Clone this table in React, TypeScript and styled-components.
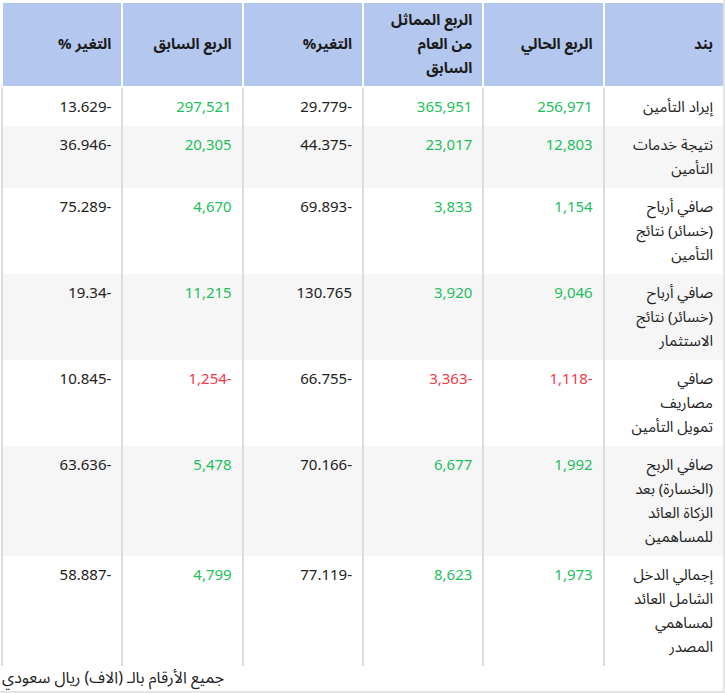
import React, { FunctionComponent } from 'react'
import styled, { createGlobalStyle } from 'styled-components'

const GlobalStyle = createGlobalStyle`
  html, body {
    margin: 0;
    padding: 0;
    background: #fff;
  }
  body {
    font-family: "Noto Sans Arabic", "Noto Sans", "DejaVu Sans", sans-serif;
    color: #222;
  }
`

const Frame = styled.div`
  width: 725px;
  height: 693px;
  box-sizing: border-box;
  padding: 3px 0 0 1px;
  border-right: 2px solid #e4e4e4;
  border-bottom: 2px solid #e4e4e4;
  overflow: hidden;
`

const Table = styled.table`
  width: 100%;
  direction: rtl;
  table-layout: fixed;
  border-collapse: separate;
  border-spacing: 0;
  font-size: 15px;
  line-height: 24px;
`

const HeadCell = styled.th`
  background: #b4c7ee;
  color: #1b1b1b;
  font-weight: 700;
  text-align: right;
  vertical-align: middle;
  padding: 5px 10px 6px;
  height: 72px;
  border-left: 2px solid #fff;
  border-bottom: 2px solid #fff;
`

const Row = styled.tr<{ $shade: boolean }>`
  background: ${(p) => (p.$shade ? '#f6f6f6' : '#fff')};
`

const Cell = styled.td<{ $tone?: 'up' | 'down' }>`
  text-align: right;
  vertical-align: top;
  padding: 7px 10px;
  border-left: 2px solid #dcdcdc;
  color: ${(p) => (p.$tone === 'up' ? '#1dbf5c' : p.$tone === 'down' ? '#f2394b' : '#222')};
`

const Note = styled.div`
  direction: rtl;
  text-align: left;
  font-size: 16px;
  line-height: 24px;
  padding-left: 1px;
`

type LineType = {
  label: string[]
  current: string
  sameLastYear: string
  changeYear: string
  previous: string
  changeQuarter: string
}

const headers: string[][] = [
  ['بند'],
  ['الربع الحالي'],
  ['الربع المماثل', 'من العام', 'السابق'],
  ['التغير%'],
  ['الربع السابق'],
  ['التغير %'],
]

const lines: LineType[] = [
  {
    label: ['إيراد التأمين'],
    current: '256,971',
    sameLastYear: '365,951',
    changeYear: '-29.779',
    previous: '297,521',
    changeQuarter: '-13.629',
  },
  {
    label: ['نتيجة خدمات', 'التأمين'],
    current: '12,803',
    sameLastYear: '23,017',
    changeYear: '-44.375',
    previous: '20,305',
    changeQuarter: '-36.946',
  },
  {
    label: ['صافي أرباح', '(خسائر) نتائج', 'التأمين'],
    current: '1,154',
    sameLastYear: '3,833',
    changeYear: '-69.893',
    previous: '4,670',
    changeQuarter: '-75.289',
  },
  {
    label: ['صافي أرباح', '(خسائر) نتائج', 'الاستثمار'],
    current: '9,046',
    sameLastYear: '3,920',
    changeYear: '130.765',
    previous: '11,215',
    changeQuarter: '-19.34',
  },
  {
    label: ['صافي', 'مصاريف', 'تمويل التأمين'],
    current: '-1,118',
    sameLastYear: '-3,363',
    changeYear: '-66.755',
    previous: '-1,254',
    changeQuarter: '-10.845',
  },
  {
    label: ['صافي الربح', '(الخسارة) بعد', 'الزكاة العائد', 'للمساهمين'],
    current: '1,992',
    sameLastYear: '6,677',
    changeYear: '-70.166',
    previous: '5,478',
    changeQuarter: '-63.636',
  },
  {
    label: ['إجمالي الدخل', 'الشامل العائد', 'لمساهمي', 'المصدر'],
    current: '1,973',
    sameLastYear: '8,623',
    changeYear: '-77.119',
    previous: '4,799',
    changeQuarter: '-58.887',
  },
]

const tone = (value: string) => (value.startsWith('-') ? 'down' : 'up')

const Lines: FunctionComponent<{ parts: string[] }> = ({ parts }) => (
  <>
    {parts.map((part, i) => (
      <React.Fragment key={part}>
        {i > 0 && <br />}
        {part}
      </React.Fragment>
    ))}
  </>
)

const App: FunctionComponent<{}> = () => {
  return (
    <>
      <GlobalStyle />
      <Frame>
        <Table>
          <thead>
            <tr>
              {headers.map((h) => (
                <HeadCell key={h.join(' ')}>
                  <Lines parts={h} />
                </HeadCell>
              ))}
            </tr>
          </thead>
          <tbody>
            {lines.map((line, i) => (
              <Row key={line.label.join(' ')} $shade={i % 2 === 1}>
                <Cell>
                  <Lines parts={line.label} />
                </Cell>
                <Cell $tone={tone(line.current)}>{line.current}</Cell>
                <Cell $tone={tone(line.sameLastYear)}>{line.sameLastYear}</Cell>
                <Cell>{line.changeYear}</Cell>
                <Cell $tone={tone(line.previous)}>{line.previous}</Cell>
                <Cell>{line.changeQuarter}</Cell>
              </Row>
            ))}
          </tbody>
        </Table>
        <Note>جميع الأرقام بالـ (الاف) ريال سعودي</Note>
      </Frame>
    </>
  )
}

export default App
